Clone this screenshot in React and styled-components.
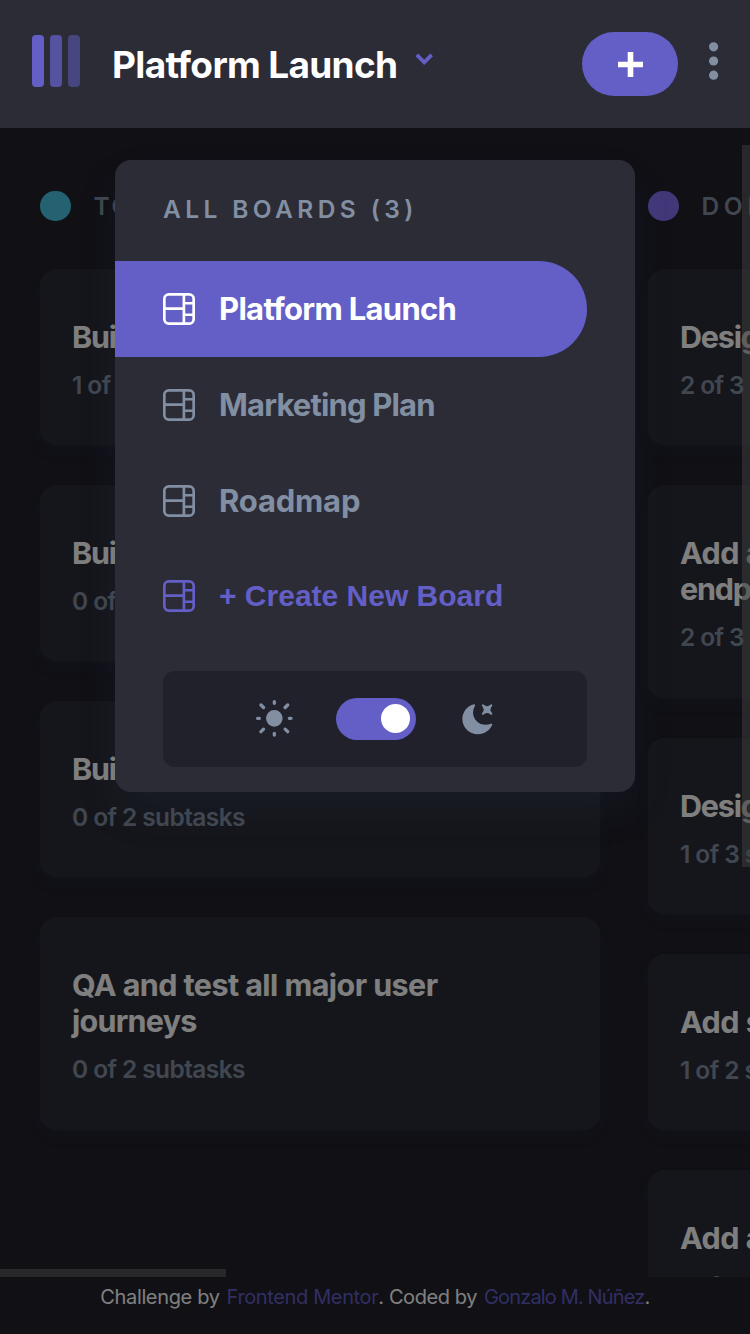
import React from "react";
import styled, { createGlobalStyle, css } from "styled-components";

const GlobalStyle = createGlobalStyle`
  * { box-sizing: border-box; }
  html, body { margin: 0; padding: 0; background: #20202a; }
  body {
    font-family: Inter, "Liberation Sans", sans-serif;
    overflow: hidden;
  }
  h1, h2, h3, p, ul { margin: 0; padding: 0; }
  ul { list-style: none; }
  button { border: 0; padding: 0; background: none; font: inherit; color: inherit; }
`;

const Page = styled.div`
  position: relative;
  width: 750px;
  height: 1334px;
  display: flex;
  flex-direction: column;
  overflow: hidden;
  background: #20202a;
`;

const Header = styled.header`
  flex: none;
  height: 128px;
  padding: 0 31.5px 0 32px;
  display: flex;
  align-items: center;
  background: #2c2c37;
`;

const Logo = styled.div`
  display: flex;
  gap: 6px;
  margin: -6px 32px 0 0;
`;

const LogoBar = styled.span`
  width: 12px;
  height: 52px;
  border-radius: 4px;
  background: #635fc7;
  opacity: ${(p) => p.$opacity};
`;

const BoardTitle = styled.h1`
  color: #fff;
  font-size: 37px;
  font-weight: 700;
  line-height: 48px;
  letter-spacing: ${(p) => p.$tracking}px;
  white-space: nowrap;
  width: 302.5px;
  padding-top: 2px;
`;

const Chevron = styled.svg`
  width: 18.5px;
  height: 13px;
  margin-top: -10px;
`;

const AddButton = styled.button`
  display: grid;
  place-items: center;
  width: 96px;
  height: 64px;
  margin-left: auto;
  border-radius: 32px;
  background: #635fc7;
`;

const DotsIcon = styled.svg`
  width: 9.2px;
  height: 38px;
  margin: -7px 0 0 31px;
  fill: #828fa3;
`;

const Board = styled.main`
  position: relative;
  flex: none;
  height: 1149px;
  display: flex;
  gap: 48px;
  padding: 63px 40px 0;
  overflow: hidden;
`;

const Column = styled.section`
  flex: none;
  width: 560px;
`;

const ColumnHead = styled.div`
  display: flex;
  align-items: center;
  gap: 23px;
  height: 30px;
  margin-bottom: 48px;
`;

const Bullet = styled.span`
  width: 30.5px;
  height: 30.5px;
  border-radius: 50%;
  background: ${(p) => p.$color};
`;

const Caption = styled.h2`
  color: #828fa3;
  font-size: 24.5px;
  font-weight: 600;
  line-height: 30px;
  letter-spacing: ${(p) => p.$tracking}px;
  white-space: nowrap;
`;

const Cards = styled.div`
  display: flex;
  flex-direction: column;
  gap: 40px;
`;

const Card = styled.article`
  height: ${(p) => (p.$tall ? 213 : 176)}px;
  padding: 50px 32px 0;
  border-radius: 16px;
  background: #2b2d36;
  box-shadow: 0 8px 12px rgba(54, 78, 126, 0.1);
`;

const CardTitle = styled.h3`
  color: #fff;
  font-size: 30.5px;
  font-weight: 700;
  line-height: 36.4px;
`;

const Line = styled.span`
  display: block;
  white-space: nowrap;
  letter-spacing: ${(p) => p.$tracking}px;
`;

const CardMeta = styled.p`
  margin-top: 14.6px;
  color: #828fa3;
  font-size: 24.5px;
  font-weight: 600;
  line-height: 30px;
  letter-spacing: -0.6px;
  white-space: nowrap;
`;

const ScrollThumb = styled.div`
  position: absolute;
  background: rgba(128, 128, 128, 0.5);
  ${(p) =>
    p.$vertical
      ? css`top: 17px; right: 0; width: 8px; height: 722px;`
      : css`left: 0; bottom: 0; width: 226px; height: 8px;`}
`;

const Footer = styled.footer`
  display: flex;
  justify-content: center;
  align-items: center;
  height: 40px;
  color: #fff;
  font-size: 20px;
  white-space: pre;
`;

const FooterText = styled.span`
  letter-spacing: ${(p) => p.$tracking}px;
  margin-right: ${(p) => p.$gap ?? 0}px;
`;

const FooterLink = styled(FooterText)`
  color: #635fc7;
`;

const Overlay = styled.div`
  position: absolute;
  inset: 128px 0 0;
  padding: 32px 115px;
  background: rgba(0, 0, 0, 0.5);
`;

const Menu = styled.nav`
  width: 520px;
  height: 632px;
  padding-top: 34px;
  border-radius: 16px;
  background: #2c2c37;
  box-shadow: 0 20px 40px rgba(54, 78, 126, 0.1);
`;

const MenuHeading = styled(Caption)`
  padding-left: 48px;
  margin-bottom: 37px;
`;

const MenuItem = styled.li`
  display: flex;
  align-items: center;
  gap: 24px;
  width: 472px;
  height: 96px;
  padding: 0 0 1px 48px;
  border-radius: 0 48px 48px 0;
  font-size: 31px;
  font-weight: 700;
  white-space: nowrap;
  letter-spacing: ${(p) => p.$tracking}px;
  color: ${(p) => (p.$active ? "#fff" : "#828fa3")};
  background: ${(p) => (p.$active ? "#635fc7" : "transparent")};
`;

const CreateItem = styled(MenuItem)`
  height: 93px;
  padding-bottom: 0;
  color: #635fc7;
  font-family: "Liberation Sans", Arial, sans-serif;
  font-size: 30px;
`;

const ThemeBar = styled.div`
  display: flex;
  align-items: center;
  justify-content: center;
  width: 424px;
  height: 96px;
  margin: 28.5px 0 0 48px;
  padding: 0 2px 0 0;
  border-radius: 12px;
  background: #21212c;
`;

const Switch = styled.button`
  display: flex;
  align-items: center;
  justify-content: flex-end;
  width: 80px;
  height: 42px;
  margin: 0 45px 0 42px;
  padding-right: 6px;
  border-radius: 21px;
  background: #635fc7;
`;

const Knob = styled.span`
  width: 29px;
  height: 29px;
  border-radius: 50%;
  background: #fff;
`;

const BoardIcon = () => (
  <svg width="32" height="32" viewBox="0 0 16 16" fill="currentColor">
    <path d="M0 2.889A2.889 2.889 0 0 1 2.889 0H13.11A2.889 2.889 0 0 1 16 2.889V13.11A2.888 2.888 0 0 1 13.111 16H2.89A2.889 2.889 0 0 1 0 13.111V2.89Zm1.333 5.555v4.667c0 .859.697 1.556 1.556 1.556h6.889V8.444H1.333Zm8.445-1.333V1.333h-6.89A1.556 1.556 0 0 0 1.334 2.89V7.11h8.445Zm4.889-1.333H11.11v4.444h3.556V5.778Zm0 5.778H11.11v3.11h2a1.556 1.556 0 0 0 1.556-1.555v-1.555Zm0-7.112V2.89a1.555 1.555 0 0 0-1.556-1.556h-2v3.111h3.556Z" />
  </svg>
);

const SunIcon = () => (
  <svg width="38" height="38" viewBox="0 0 19 19" fill="#828fa3">
    <path d="M9.167 15.833a.833.833 0 0 1 .833.834v.833a.833.833 0 0 1-1.667 0v-.833a.833.833 0 0 1 .834-.834ZM3.75 13.75a.833.833 0 0 1 .59 1.422l-1.25 1.25a.833.833 0 0 1-1.18-1.178l1.25-1.25a.833.833 0 0 1 .59-.244Zm10.833 0c.221 0 .433.088.59.244l1.25 1.25a.833.833 0 0 1-1.179 1.178l-1.25-1.25a.833.833 0 0 1 .59-1.422ZM9.167 5a4.167 4.167 0 1 1 0 8.334 4.167 4.167 0 0 1 0-8.334Zm-7.5 3.333a.833.833 0 0 1 0 1.667H.833a.833.833 0 1 1 0-1.667h.834Zm15.833 0a.833.833 0 0 1 0 1.667h-.833a.833.833 0 0 1 0-1.667h.833Zm-1.667-6.666a.833.833 0 0 1 .59 1.422l-1.25 1.25a.833.833 0 1 1-1.179-1.178l1.25-1.25a.833.833 0 0 1 .59-.244Zm-13.333 0c.221 0 .433.088.59.244l1.25 1.25a.833.833 0 0 1-1.18 1.178L1.91 3.09a.833.833 0 0 1 .59-1.422ZM9.167 0A.833.833 0 0 1 10 .833v.834a.833.833 0 1 1-1.667 0V.833A.833.833 0 0 1 9.167 0Z" />
  </svg>
);

const MoonIcon = () => (
  <svg width="32" height="32" viewBox="0 0 16 16" fill="#828fa3">
    <path d="M6.474.682c.434-.11.718.406.481.78A6.067 6.067 0 0 0 6.01 4.72c0 3.418 2.827 6.187 6.314 6.187.89.002 1.77-.182 2.584-.54.408-.18.894.165.724.57-1.16 2.775-3.944 4.73-7.194 4.73-4.292 0-7.771-3.41-7.771-7.615 0-3.541 2.466-6.518 5.807-7.37Zm8.433.07c.442-.294.969.232.674.674l-.525.787a1.943 1.943 0 0 0 0 2.157l.525.788c.295.441-.232.968-.674.673l-.787-.525a1.943 1.943 0 0 0-2.157 0l-.786.525c-.442.295-.97-.232-.675-.673l.525-.788a1.943 1.943 0 0 0 0-2.157l-.525-.787c-.295-.442.232-.968.674-.673l.787.525a1.943 1.943 0 0 0 2.157 0l.787-.526Z" />
  </svg>
);

const columns = [
  {
    name: "TODO (4)",
    tracking: 2.6,
    color: "#49c4e5",
    cards: [
      { lines: [["Build UI for onboarding flow", -1.2]], meta: "1 of 3 subtasks" },
      { lines: [["Build UI for search", -1.2]], meta: "0 of 1 subtasks" },
      { lines: [["Build settings UI", -1.2]], meta: "0 of 2 subtasks" },
      { lines: [["QA and test all major user", -0.57], ["journeys", -0.75]], meta: "0 of 2 subtasks" },
    ],
  },
  {
    name: "DOING (6)",
    tracking: 4.6,
    color: "#8471f2",
    cards: [
      { lines: [["Design settings and search", -1.2]], meta: "2 of 3 subtasks" },
      { lines: [["Add account management", -0.5], ["endpoints", -1.2]], meta: "2 of 3 subtasks" },
      { lines: [["Design onboarding flow", -1.2]], meta: "1 of 3 subtasks" },
      { lines: [["Add search endpoints", -0.5]], meta: "1 of 2 subtasks" },
      { lines: [["Add authentication endpoints", -0.5]], meta: "1 of 2 subtasks" },
    ],
  },
];

const boards = [
  { name: "Platform Launch", tracking: -0.7, active: true },
  { name: "Marketing Plan", tracking: -0.85 },
  { name: "Roadmap", tracking: -0.2 },
];

export default function App() {
  return (
    <>
      <GlobalStyle />
      <Page>
        <Header>
          <Logo>
            <LogoBar $opacity={1} />
            <LogoBar $opacity={0.75} />
            <LogoBar $opacity={0.5} />
          </Logo>
          <BoardTitle $tracking={-0.68}>Platform Launch</BoardTitle>
          <Chevron viewBox="0 0 10 7" fill="none" stroke="#635fc7" strokeWidth="2">
            <path d="m1 1 4 4 4-4" />
          </Chevron>
          <AddButton aria-label="Add task">
            <svg width="25" height="25" viewBox="0 0 25 25" fill="#fff">
              <path d="M9.7 25V15.3H0V9.7h9.7V0h5.6v9.7H25v5.6h-9.7V25Z" />
            </svg>
          </AddButton>
          <DotsIcon viewBox="0 0 9.2 38">
            <circle cx="4.6" cy="4.8" r="4.6" />
            <circle cx="4.6" cy="19" r="4.6" />
            <circle cx="4.6" cy="33.2" r="4.6" />
          </DotsIcon>
        </Header>

        <Board>
          {columns.map((column) => (
            <Column key={column.name}>
              <ColumnHead>
                <Bullet $color={column.color} />
                <Caption $tracking={column.tracking}>{column.name}</Caption>
              </ColumnHead>
              <Cards>
                {column.cards.map((card) => (
                  <Card key={card.lines[0][0]} $tall={card.lines.length > 1}>
                    <CardTitle>
                      {card.lines.map(([text, tracking]) => (
                        <Line key={text} $tracking={tracking}>{text}</Line>
                      ))}
                    </CardTitle>
                    <CardMeta>{card.meta}</CardMeta>
                  </Card>
                ))}
              </Cards>
            </Column>
          ))}
          <ScrollThumb $vertical />
          <ScrollThumb />
        </Board>

        <Footer>
          <FooterText $tracking={-0.35} $gap={7}>Challenge by</FooterText>
          <FooterLink $tracking={-0.37}>Frontend Mentor</FooterLink>
          <FooterText $tracking={-0.42} $gap={7}>. Coded by</FooterText>
          <FooterLink $tracking={-0.85}>Gonzalo M. Núñez</FooterLink>
          <FooterText $tracking={-0.5}>.</FooterText>
        </Footer>

        <Overlay>
          <Menu>
            <MenuHeading $tracking={4.4}>ALL BOARDS (3)</MenuHeading>
            <ul>
              {boards.map((board) => (
                <MenuItem key={board.name} $active={board.active} $tracking={board.tracking}>
                  <BoardIcon />
                  {board.name}
                </MenuItem>
              ))}
              <CreateItem $tracking={0}>
                <BoardIcon />
                + Create New Board
              </CreateItem>
            </ul>
            <ThemeBar>
              <SunIcon />
              <Switch aria-label="Dark mode">
                <Knob />
              </Switch>
              <MoonIcon />
            </ThemeBar>
          </Menu>
        </Overlay>
      </Page>
    </>
  );
}
